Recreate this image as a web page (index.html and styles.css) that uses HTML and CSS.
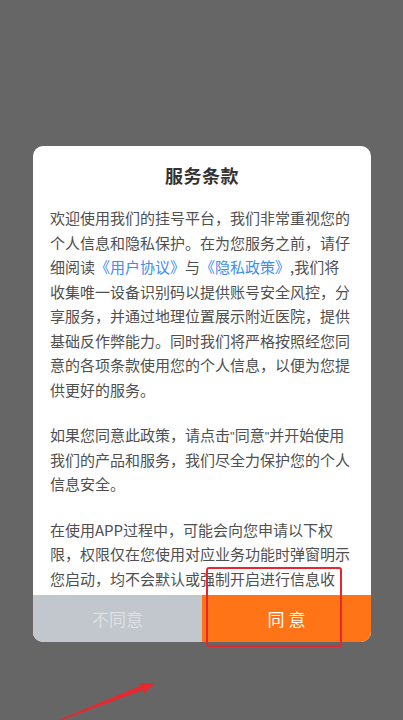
FILE: index.html
```html
<!DOCTYPE html>
<html lang="zh-CN">
<head>
<meta charset="utf-8">
<title>服务条款</title>
<link rel="stylesheet" href="styles.css">
</head>
<body>
<div class="screen">
  <div class="dialog">
    <div class="title">服务条款</div>
    <div class="content">
      <p>欢迎使用我们的挂号平台，我们非常重视您的<br>个人信息和隐私保护。在为您服务之前，请仔<br>细阅读<span class="link">《用户协议》</span>与<span class="link">《隐私政策》</span>,我们将<br>收集唯一设备识别码以提供账号安全风控，分<br>享服务，并通过地理位置展示附近医院，提供<br>基础反作弊能力。同时我们将严格按照经您同<br>意的各项条款使用您的个人信息，以便为您提<br>供更好的服务。</p>
      <p>如果您同意此政策，请点击<span class="q">"</span>同意<span class="q">"</span>并开始使用<br>我们的产品和服务，我们尽全力保护您的个人<br>信息安全。</p>
      <p>在使用APP过程中，可能会向您申请以下权<br>限，权限仅在您使用对应业务功能时弹窗明示<br>您启动，均不会默认或强制开启进行信息收</p>
    </div>
    <div class="actions">
      <div class="btn btn-decline">不同意</div>
      <div class="btn btn-accept">同 意</div>
    </div>
  </div>
  <div class="highlight"></div>
  <svg class="arrow" width="403" height="720" viewBox="0 0 403 720">
    <polygon points="57,720.5 59,721 142.6,690.2 141.4,685.6" fill="#e8282f"/>
    <polygon points="155,683 140,683 144.2,693.2" fill="#e8282f"/>
  </svg>
</div>
</body>
</html>
```
FILE: styles.css
```css
html, body {
  margin: 0;
  padding: 0;
}
body {
  background: #666666;
  font-family: "Noto Sans CJK SC", "Noto Sans", sans-serif;
}
.screen {
  position: relative;
  width: 403px;
  height: 720px;
  overflow: hidden;
  background: #666666;
  display: flex;
  flex-direction: column;
  align-items: center;
  padding-top: 146px;
  box-sizing: border-box;
}
.dialog {
  width: 338px;
  margin-left: 1px;
  background: #ffffff;
  border-radius: 10px;
  overflow: hidden;
  display: flex;
  flex-direction: column;
}
.title {
  padding-top: 17px;
  height: 24px;
  line-height: 24px;
  text-align: center;
  font-size: 18px;
  font-weight: bold;
  color: #333333;
  letter-spacing: 0.5px;
}
.content {
  margin-top: 19px;
  height: 389px;
  overflow: hidden;
  padding-left: 17px;
  font-size: 15px;
  line-height: 24.5px;
  color: #4f4f4f;
  white-space: nowrap;
}
.content p {
  margin: 0 0 21px 0;
}
.q {
  font-family: "Liberation Sans", sans-serif;
  font-size: 13px;
  line-height: 1;
}
.link {
  color: #3d8cf0;
}
.actions {
  display: flex;
  height: 47px;
}
.btn {
  flex: 1;
  display: flex;
  align-items: center;
  justify-content: center;
  font-size: 17px;
}
.btn-decline {
  background: #c1c7cc;
  color: #dde1e4;
}
.btn-accept {
  background: #ff7416;
  color: #ffffff;
}
.highlight {
  position: absolute;
  left: 206px;
  top: 567px;
  width: 132px;
  height: 76px;
  border: 2.5px solid #e8262f;
  border-radius: 3px;
}
.arrow {
  position: absolute;
  left: 0;
  top: 0;
}
```
